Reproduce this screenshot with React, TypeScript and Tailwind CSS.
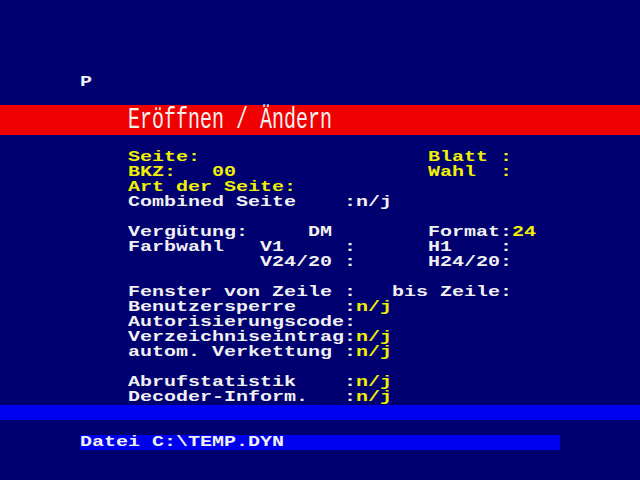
import React from "react";

type Seg = { t: string; c?: "w" | "y" };
type Row = Seg[];

const W = "text-[#f0f0f0]";
const Y = "text-[#f0f000]";

// 40 columns x 12px, starting at x=80; rows 15px high
const rows: (Row | null)[] = [
  [{ t: "    Seite:", c: "y" }, { t: "                   Blatt :", c: "y" }],
  [{ t: "    BKZ:   00", c: "y" }, { t: "                Wahl  :", c: "y" }],
  [{ t: "    Art der Seite:", c: "y" }],
  [{ t: "    Combined Seite    :n/j" }],
  null,
  [{ t: "    Vergütung:     DM        Format:" }, { t: "24", c: "y" }],
  [{ t: "    Farbwahl   V1     :      H1    :" }],
  [{ t: "               V24/20 :      H24/20:" }],
  null,
  [{ t: "    Fenster von Zeile :   bis Zeile:" }],
  [{ t: "    Benutzersperre    :" }, { t: "n/j", c: "y" }],
  [{ t: "    Autorisierungscode:" }],
  [{ t: "    Verzeichniseintrag:" }, { t: "n/j", c: "y" }],
  [{ t: "    autom. Verkettung :" }, { t: "n/j", c: "y" }],
  null,
  [{ t: "    Abrufstatistik    :" }, { t: "n/j", c: "y" }],
  [{ t: "    Decoder-Inform.   :" }, { t: "n/j", c: "y" }],
];

const TextRow = ({ row }: { row: Row | null }) => (
  <div className="h-[15px] pl-[80px]">
    <div className="origin-top scale-y-75 whitespace-pre leading-[20px]">
      {row?.map((s, i) => (
        <span key={i} className={s.c === "y" ? Y : W}>
          {s.t}
        </span>
      ))}
    </div>
  </div>
);

export default function App() {
  return (
    <div
      className="w-[640px] h-[480px] overflow-hidden bg-[#000070] flex flex-col text-[20px] font-bold"
      style={{ fontFamily: '"Liberation Mono", "DejaVu Sans Mono", monospace' }}
    >
      <div className="h-[75px]" />
      <TextRow row={[{ t: "P" }]} />
      <div className="h-[15px]" />
      <div className="h-[30px] bg-[#f00000] pl-[128px]">
        <div className={`origin-top scale-y-150 whitespace-pre leading-[20px] font-normal ${W}`}>
          Eröffnen / Ändern
        </div>
      </div>
      <div className="h-[15px]" />
      {rows.map((r, i) => (
        <TextRow key={i} row={r} />
      ))}
      <div className="h-[15px] bg-[#0000f0]" />
      <div className="h-[15px]" />
      <div className="h-[15px] ml-[80px] w-[480px] bg-[#0000f0]">
        <div className={`origin-top scale-y-75 whitespace-pre leading-[20px] ${W}`}>
          Datei C:\TEMP.DYN
        </div>
      </div>
    </div>
  );
}
